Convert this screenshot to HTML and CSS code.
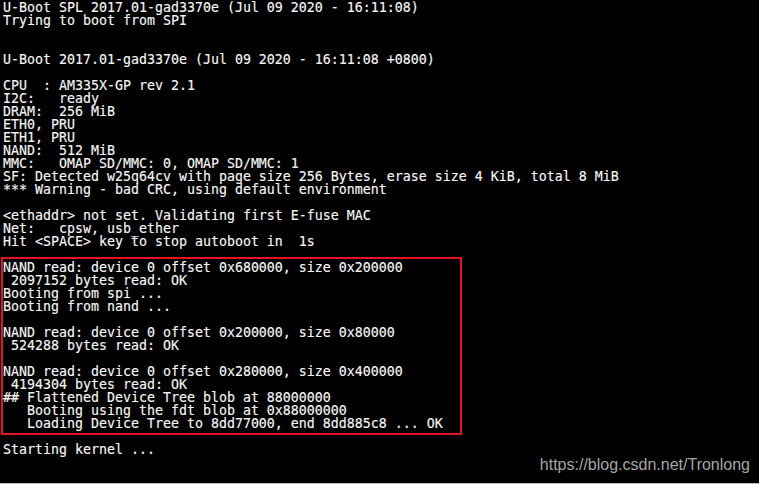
FILE: index.html
```html
<!DOCTYPE html>
<html>
<head>
<meta charset="utf-8">
<link rel="stylesheet" href="styles.css">
</head>
<body>
<div class="term">
<pre class="lines">U-Boot SPL 2017.01-gad3370e (Jul 09 2020 - 16:11:08)
Trying to boot from SPI


U-Boot 2017.01-gad3370e (Jul 09 2020 - 16:11:08 +0800)

CPU  : AM335X-GP rev 2.1
I2C:   ready
DRAM:  256 MiB
ETH0, PRU
ETH1, PRU
NAND:  512 MiB
MMC:   OMAP SD/MMC: 0, OMAP SD/MMC: 1
SF: Detected w25q64cv with page size 256 Bytes, erase size 4 KiB, total 8 MiB
*** Warning - bad CRC, using default environment

&lt;ethaddr&gt; not set. Validating first E-fuse MAC
Net:   cpsw, usb_ether
Hit &lt;SPACE&gt; key to stop autoboot in  1s</pre>
<div class="highlight">
<pre class="lines">NAND read: device 0 offset 0x680000, size 0x200000
 2097152 bytes read: OK
Booting from spi ...
Booting from nand ...

NAND read: device 0 offset 0x200000, size 0x80000
 524288 bytes read: OK

NAND read: device 0 offset 0x280000, size 0x400000
 4194304 bytes read: OK
## Flattened Device Tree blob at 88000000
   Booting using the fdt blob at 0x88000000
   Loading Device Tree to 8dd77000, end 8dd885c8 ... OK</pre>
</div>
<pre class="lines">Starting kernel ...</pre>
<div class="watermark">https://blog.csdn.net/Tronlong</div>
</div>
</body>
</html>
```

FILE: styles.css
```css
html, body {
  margin: 0;
  padding: 0;
  background: #000;
}

.term {
  position: relative;
  box-sizing: border-box;
  width: 759px;
  height: 484px;
  padding: 1px 0 0 3px;
  background: #000;
  border-bottom: 1px solid #b8b8b8;
  overflow: hidden;
}

.lines {
  margin: 0;
  font-family: "DejaVu Sans Mono", monospace;
  font-size: 13.29px;
  line-height: 13px;
  color: #f4f4f4;
  white-space: pre;
  -webkit-text-stroke: 0.15px #f4f4f4;
}

.highlight {
  box-sizing: border-box;
  width: 461px;
  margin: 9px 0 8px -2px;
  padding: 2px 0 3px 0;
  border: 2px solid #e3141f;
}

.watermark {
  position: absolute;
  right: 9px;
  top: 456px;
  font-family: "Liberation Sans", Arial, sans-serif;
  font-size: 16px;
  color: #a6a6a6;
}
```
